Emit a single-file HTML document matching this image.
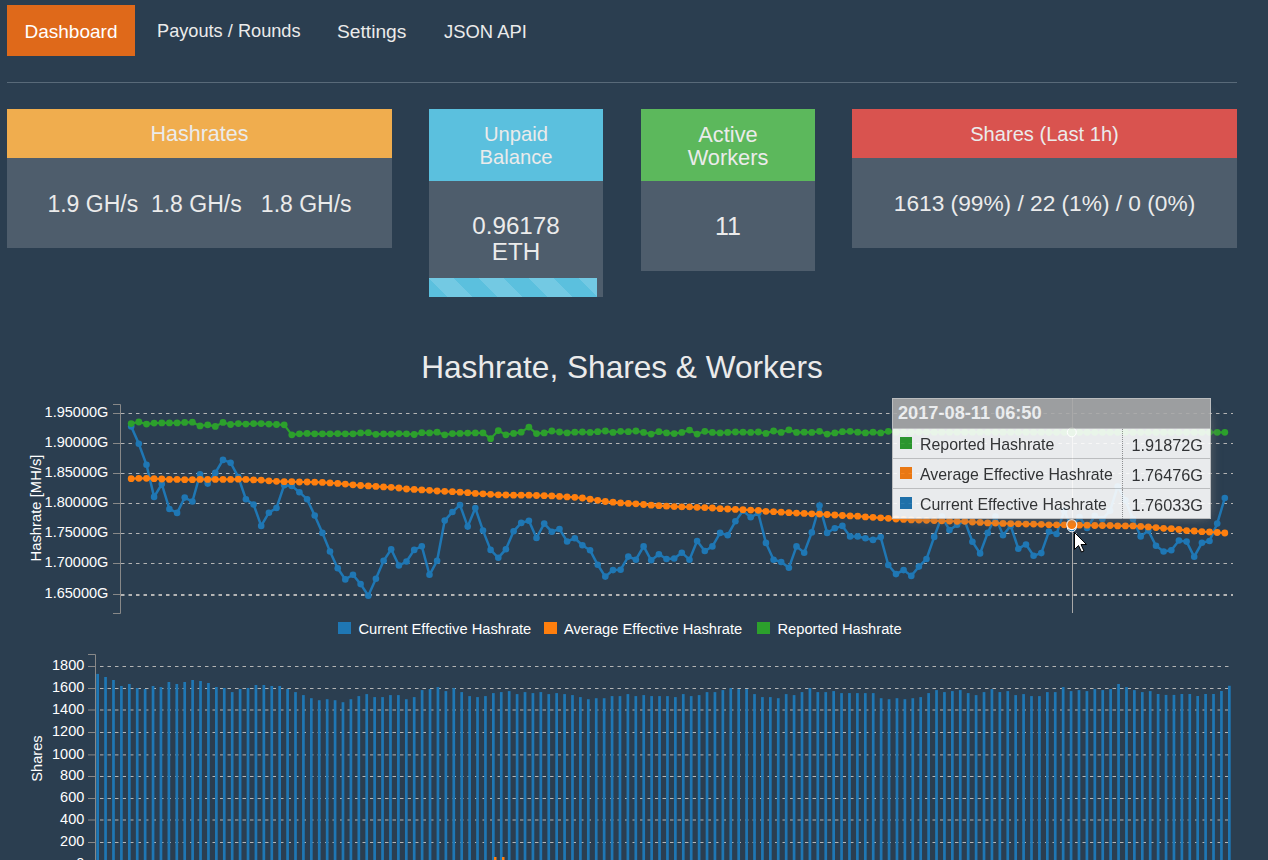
<!DOCTYPE html>
<html><head><meta charset="utf-8">
<style>
html,body{margin:0;padding:0;}
body{width:1268px;height:860px;overflow:hidden;background:#2b3e50;font-family:"Liberation Sans",sans-serif;color:#ebebeb;position:relative;}
.a{position:absolute;}
.nav{top:5px;height:51px;line-height:51px;font-size:18px;color:#ebebeb;white-space:nowrap;}
.navact{left:7px;width:128px;background:#df691a;color:#fff;text-align:center;}
hr.sep{position:absolute;left:7px;top:82px;width:1230px;height:1px;margin:0;border:0;background:#596a79;}
.card{position:absolute;top:109px;background:#4e5d6c;}
.hd{text-align:center;color:#ebebeb;font-size:19px;}
.bd{text-align:center;color:#ebebeb;font-size:23px;}
.tip{opacity:0.9;background:#fff;box-shadow:7px 7px 12px -9px #777;outline:1px solid #ccc;outline-offset:-1px;}
.tip .th{height:30px;line-height:31px;background:#aaa;color:#fff;font-weight:bold;font-size:18.2px;padding-left:6px;box-sizing:border-box;}
.tip .tr{position:relative;height:30px;border-top:1px solid #ccc;box-sizing:border-box;color:#333;font-size:15.9px;line-height:30px;}
.tip .sw{position:absolute;left:8px;top:8px;width:12px;height:12px;}
.tip .tr:last-child{height:31px;}
.tip .nm{position:absolute;left:28px;top:1px;}
.tip .vl{position:absolute;right:8px;top:1px;font-size:16.3px;}
.tip .tr:after{content:"";position:absolute;left:230px;top:0;bottom:0;border-left:1px dotted #999;}
</style></head><body>
<div class="a nav navact" style="font-size:19px;line-height:53px">Dashboard</div>
<div class="a nav" style="left:157px;font-size:18.2px;line-height:53px">Payouts / Rounds</div>
<div class="a nav" style="left:337px;font-size:19.2px;line-height:53px">Settings</div>
<div class="a nav" style="left:444px;font-size:18.4px;line-height:53px">JSON API</div>
<hr class="sep">

<div class="card" style="left:7px;width:385px;height:139px">
  <div class="hd" style="background:#f0ad4e;height:49px;line-height:50px;font-size:21.5px">Hashrates</div>
  <div class="bd" style="line-height:92px">1.9 GH/s&nbsp; 1.8 GH/s&nbsp;&nbsp; 1.8 GH/s</div>
</div>
<div class="card" style="left:429px;width:174px;height:188px">
  <div class="hd" style="background:#5bc0de;height:72px;padding-top:14px;box-sizing:border-box;line-height:23px;font-size:20.2px">Unpaid<br>Balance</div>
  <div class="bd" style="height:97px;padding-top:32px;box-sizing:border-box;line-height:26px;font-size:24.2px">0.96178<br>ETH</div>
  <div style="width:168px;height:19px;background-color:#5bc0de;background-image:linear-gradient(45deg,rgba(255,255,255,.15) 25%,transparent 25%,transparent 50%,rgba(255,255,255,.15) 50%,rgba(255,255,255,.15) 75%,transparent 75%,transparent);background-size:50px 50px"></div>
</div>
<div class="card" style="left:641px;width:174px;height:162px">
  <div class="hd" style="background:#5cb85c;height:72px;padding-top:14px;box-sizing:border-box;line-height:23px;font-size:21.8px">Active<br>Workers</div>
  <div class="bd" style="line-height:90px;font-size:25px">11</div>
</div>
<div class="card" style="left:852px;width:385px;height:139px">
  <div class="hd" style="background:#d9534f;height:49px;line-height:50px;font-size:20.1px">Shares (Last 1h)</div>
  <div class="bd" style="line-height:90px;font-size:22.7px">1613 (99%) / 22 (1%) / 0 (0%)</div>
</div>

<div class="a" style="left:0;width:1244px;top:349px;text-align:center;font-size:31.6px;color:#ebebeb">Hashrate, Shares &amp; Workers</div>

<svg class="a" style="left:0;top:0" width="1268" height="860">
<g stroke="#b4b4b4" stroke-width="1" stroke-dasharray="3.5 4"><line x1="121" y1="413.5" x2="1233" y2="413.5"/><line x1="121" y1="443.5" x2="1233" y2="443.5"/><line x1="121" y1="473.5" x2="1233" y2="473.5"/><line x1="121" y1="503.5" x2="1233" y2="503.5"/><line x1="121" y1="533.5" x2="1233" y2="533.5"/><line x1="121" y1="563.5" x2="1233" y2="563.5"/></g><line x1="121" y1="595" x2="1233" y2="595" stroke="#b4b4b4" stroke-width="2" stroke-dasharray="3.5 4"/>
<path d="M113,404.5H120.5V613.5H113" fill="none" stroke="#888" stroke-width="1"/>
<g stroke="#888" stroke-width="1"><line x1="113" y1="413.5" x2="120" y2="413.5"/><line x1="113" y1="443.5" x2="120" y2="443.5"/><line x1="113" y1="473.5" x2="120" y2="473.5"/><line x1="113" y1="503.5" x2="120" y2="503.5"/><line x1="113" y1="533.5" x2="120" y2="533.5"/><line x1="113" y1="563.5" x2="120" y2="563.5"/><line x1="113" y1="594.5" x2="120" y2="594.5"/></g>
<g fill="#fff" font-family="Liberation Sans" font-size="14.5" text-anchor="end"><text x="108.3" y="417.0">1.95000G</text><text x="108.3" y="447.0">1.90000G</text><text x="108.3" y="477.0">1.85000G</text><text x="108.3" y="507.0">1.80000G</text><text x="108.3" y="537.0">1.75000G</text><text x="108.3" y="567.0">1.70000G</text><text x="108.3" y="598.0">1.65000G</text></g>
<text transform="translate(40.5,508) rotate(-90)" fill="#fff" font-family="Liberation Sans" font-size="14.8" text-anchor="middle">Hashrate [MH/s]</text>
<polyline points="131.2,426.4 138.8,443.8 146.5,464.8 154.1,496.9 161.8,484.1 169.4,509.0 177.1,512.9 184.7,497.6 192.4,501.5 200.0,474.3 207.7,483.6 215.3,472.9 223.0,459.9 230.6,462.7 238.3,477.1 245.9,499.2 253.6,504.5 261.2,525.9 268.9,512.7 276.5,508.0 284.2,485.2 291.8,485.9 299.4,492.2 307.1,499.2 314.7,515.5 322.4,532.9 330.0,551.5 337.7,568.3 345.3,579.4 353.0,574.8 360.6,584.1 368.3,595.7 375.9,578.7 383.6,560.8 391.2,549.2 398.9,565.5 406.5,561.5 414.2,549.9 421.8,546.2 429.5,574.8 437.1,560.8 444.7,520.6 452.4,512.0 460.0,505.0 467.7,526.6 475.3,508.0 483.0,530.6 490.6,549.9 498.3,557.8 505.9,549.2 513.6,531.3 521.2,522.9 528.9,520.8 536.5,538.0 544.2,523.6 551.8,531.7 559.5,529.0 567.1,541.5 574.8,538.3 582.4,545.2 590.1,550.3 597.7,564.8 605.3,576.6 613.0,570.1 620.6,569.7 628.3,556.6 635.9,559.7 643.6,546.4 651.2,560.3 658.9,554.3 666.5,559.0 674.2,558.5 681.8,552.7 689.5,559.7 697.1,541.0 704.8,551.0 712.4,546.4 720.1,532.9 727.7,535.2 735.4,521.3 743.0,510.8 750.7,517.3 758.3,513.1 765.9,542.9 773.6,559.7 781.2,562.0 788.9,567.8 796.5,546.4 804.2,552.7 811.8,532.4 819.5,505.5 827.1,532.9 834.8,528.3 842.4,525.9 850.1,536.4 857.7,536.4 865.4,538.3 873.0,539.9 880.7,537.1 888.3,565.0 896.0,574.1 903.6,570.1 911.3,575.9 918.9,566.6 926.5,559.0 934.2,536.9 941.8,516.5 949.5,530.1 957.1,524.8 964.8,521.0 972.4,541.7 980.1,553.4 987.7,532.9 995.4,516.5 1003.0,535.2 1010.7,525.9 1018.3,548.7 1026.0,544.5 1033.6,555.7 1041.3,553.1 1048.9,531.6 1056.6,534.0 1064.2,510.7 1071.8,527.3 1079.5,517.0 1087.1,527.9 1094.8,515.8 1102.4,519.0 1110.1,510.7 1117.7,486.5 1125.4,500.3 1133.0,519.0 1140.7,536.4 1148.3,530.6 1156.0,545.7 1163.6,551.5 1171.3,550.3 1178.9,540.5 1186.6,541.6 1194.2,556.7 1201.9,542.8 1209.5,541.0 1217.2,523.6 1224.8,498.0" fill="none" stroke="#1f77b4" stroke-width="2.5"/>
<g fill="#1f77b4"><circle cx="131.2" cy="426.4" r="3.3"/><circle cx="138.8" cy="443.8" r="3.3"/><circle cx="146.5" cy="464.8" r="3.3"/><circle cx="154.1" cy="496.9" r="3.3"/><circle cx="161.8" cy="484.1" r="3.3"/><circle cx="169.4" cy="509.0" r="3.3"/><circle cx="177.1" cy="512.9" r="3.3"/><circle cx="184.7" cy="497.6" r="3.3"/><circle cx="192.4" cy="501.5" r="3.3"/><circle cx="200.0" cy="474.3" r="3.3"/><circle cx="207.7" cy="483.6" r="3.3"/><circle cx="215.3" cy="472.9" r="3.3"/><circle cx="223.0" cy="459.9" r="3.3"/><circle cx="230.6" cy="462.7" r="3.3"/><circle cx="238.3" cy="477.1" r="3.3"/><circle cx="245.9" cy="499.2" r="3.3"/><circle cx="253.6" cy="504.5" r="3.3"/><circle cx="261.2" cy="525.9" r="3.3"/><circle cx="268.9" cy="512.7" r="3.3"/><circle cx="276.5" cy="508.0" r="3.3"/><circle cx="284.2" cy="485.2" r="3.3"/><circle cx="291.8" cy="485.9" r="3.3"/><circle cx="299.4" cy="492.2" r="3.3"/><circle cx="307.1" cy="499.2" r="3.3"/><circle cx="314.7" cy="515.5" r="3.3"/><circle cx="322.4" cy="532.9" r="3.3"/><circle cx="330.0" cy="551.5" r="3.3"/><circle cx="337.7" cy="568.3" r="3.3"/><circle cx="345.3" cy="579.4" r="3.3"/><circle cx="353.0" cy="574.8" r="3.3"/><circle cx="360.6" cy="584.1" r="3.3"/><circle cx="368.3" cy="595.7" r="3.3"/><circle cx="375.9" cy="578.7" r="3.3"/><circle cx="383.6" cy="560.8" r="3.3"/><circle cx="391.2" cy="549.2" r="3.3"/><circle cx="398.9" cy="565.5" r="3.3"/><circle cx="406.5" cy="561.5" r="3.3"/><circle cx="414.2" cy="549.9" r="3.3"/><circle cx="421.8" cy="546.2" r="3.3"/><circle cx="429.5" cy="574.8" r="3.3"/><circle cx="437.1" cy="560.8" r="3.3"/><circle cx="444.7" cy="520.6" r="3.3"/><circle cx="452.4" cy="512.0" r="3.3"/><circle cx="460.0" cy="505.0" r="3.3"/><circle cx="467.7" cy="526.6" r="3.3"/><circle cx="475.3" cy="508.0" r="3.3"/><circle cx="483.0" cy="530.6" r="3.3"/><circle cx="490.6" cy="549.9" r="3.3"/><circle cx="498.3" cy="557.8" r="3.3"/><circle cx="505.9" cy="549.2" r="3.3"/><circle cx="513.6" cy="531.3" r="3.3"/><circle cx="521.2" cy="522.9" r="3.3"/><circle cx="528.9" cy="520.8" r="3.3"/><circle cx="536.5" cy="538.0" r="3.3"/><circle cx="544.2" cy="523.6" r="3.3"/><circle cx="551.8" cy="531.7" r="3.3"/><circle cx="559.5" cy="529.0" r="3.3"/><circle cx="567.1" cy="541.5" r="3.3"/><circle cx="574.8" cy="538.3" r="3.3"/><circle cx="582.4" cy="545.2" r="3.3"/><circle cx="590.1" cy="550.3" r="3.3"/><circle cx="597.7" cy="564.8" r="3.3"/><circle cx="605.3" cy="576.6" r="3.3"/><circle cx="613.0" cy="570.1" r="3.3"/><circle cx="620.6" cy="569.7" r="3.3"/><circle cx="628.3" cy="556.6" r="3.3"/><circle cx="635.9" cy="559.7" r="3.3"/><circle cx="643.6" cy="546.4" r="3.3"/><circle cx="651.2" cy="560.3" r="3.3"/><circle cx="658.9" cy="554.3" r="3.3"/><circle cx="666.5" cy="559.0" r="3.3"/><circle cx="674.2" cy="558.5" r="3.3"/><circle cx="681.8" cy="552.7" r="3.3"/><circle cx="689.5" cy="559.7" r="3.3"/><circle cx="697.1" cy="541.0" r="3.3"/><circle cx="704.8" cy="551.0" r="3.3"/><circle cx="712.4" cy="546.4" r="3.3"/><circle cx="720.1" cy="532.9" r="3.3"/><circle cx="727.7" cy="535.2" r="3.3"/><circle cx="735.4" cy="521.3" r="3.3"/><circle cx="743.0" cy="510.8" r="3.3"/><circle cx="750.7" cy="517.3" r="3.3"/><circle cx="758.3" cy="513.1" r="3.3"/><circle cx="765.9" cy="542.9" r="3.3"/><circle cx="773.6" cy="559.7" r="3.3"/><circle cx="781.2" cy="562.0" r="3.3"/><circle cx="788.9" cy="567.8" r="3.3"/><circle cx="796.5" cy="546.4" r="3.3"/><circle cx="804.2" cy="552.7" r="3.3"/><circle cx="811.8" cy="532.4" r="3.3"/><circle cx="819.5" cy="505.5" r="3.3"/><circle cx="827.1" cy="532.9" r="3.3"/><circle cx="834.8" cy="528.3" r="3.3"/><circle cx="842.4" cy="525.9" r="3.3"/><circle cx="850.1" cy="536.4" r="3.3"/><circle cx="857.7" cy="536.4" r="3.3"/><circle cx="865.4" cy="538.3" r="3.3"/><circle cx="873.0" cy="539.9" r="3.3"/><circle cx="880.7" cy="537.1" r="3.3"/><circle cx="888.3" cy="565.0" r="3.3"/><circle cx="896.0" cy="574.1" r="3.3"/><circle cx="903.6" cy="570.1" r="3.3"/><circle cx="911.3" cy="575.9" r="3.3"/><circle cx="918.9" cy="566.6" r="3.3"/><circle cx="926.5" cy="559.0" r="3.3"/><circle cx="934.2" cy="536.9" r="3.3"/><circle cx="941.8" cy="516.5" r="3.3"/><circle cx="949.5" cy="530.1" r="3.3"/><circle cx="957.1" cy="524.8" r="3.3"/><circle cx="964.8" cy="521.0" r="3.3"/><circle cx="972.4" cy="541.7" r="3.3"/><circle cx="980.1" cy="553.4" r="3.3"/><circle cx="987.7" cy="532.9" r="3.3"/><circle cx="995.4" cy="516.5" r="3.3"/><circle cx="1003.0" cy="535.2" r="3.3"/><circle cx="1010.7" cy="525.9" r="3.3"/><circle cx="1018.3" cy="548.7" r="3.3"/><circle cx="1026.0" cy="544.5" r="3.3"/><circle cx="1033.6" cy="555.7" r="3.3"/><circle cx="1041.3" cy="553.1" r="3.3"/><circle cx="1048.9" cy="531.6" r="3.3"/><circle cx="1056.6" cy="534.0" r="3.3"/><circle cx="1064.2" cy="510.7" r="3.3"/><circle cx="1071.8" cy="527.3" r="3.3"/><circle cx="1079.5" cy="517.0" r="3.3"/><circle cx="1087.1" cy="527.9" r="3.3"/><circle cx="1094.8" cy="515.8" r="3.3"/><circle cx="1102.4" cy="519.0" r="3.3"/><circle cx="1110.1" cy="510.7" r="3.3"/><circle cx="1117.7" cy="486.5" r="3.3"/><circle cx="1125.4" cy="500.3" r="3.3"/><circle cx="1133.0" cy="519.0" r="3.3"/><circle cx="1140.7" cy="536.4" r="3.3"/><circle cx="1148.3" cy="530.6" r="3.3"/><circle cx="1156.0" cy="545.7" r="3.3"/><circle cx="1163.6" cy="551.5" r="3.3"/><circle cx="1171.3" cy="550.3" r="3.3"/><circle cx="1178.9" cy="540.5" r="3.3"/><circle cx="1186.6" cy="541.6" r="3.3"/><circle cx="1194.2" cy="556.7" r="3.3"/><circle cx="1201.9" cy="542.8" r="3.3"/><circle cx="1209.5" cy="541.0" r="3.3"/><circle cx="1217.2" cy="523.6" r="3.3"/><circle cx="1224.8" cy="498.0" r="3.3"/></g>
<polyline points="131.2,478.7 138.8,478.3 146.5,478.3 154.1,478.7 161.8,479.0 169.4,479.4 177.1,479.4 184.7,479.7 192.4,479.7 200.0,479.4 207.7,479.4 215.3,479.4 223.0,479.4 230.6,479.4 238.3,479.2 245.9,479.4 253.6,479.9 261.2,480.1 268.9,480.8 276.5,481.3 284.2,481.7 291.8,481.7 299.4,482.0 307.1,482.0 314.7,482.2 322.4,482.4 330.0,482.9 337.7,483.4 345.3,484.1 353.0,484.8 360.6,485.5 368.3,485.9 375.9,486.4 383.6,486.9 391.2,487.3 398.9,488.0 406.5,489.0 414.2,489.4 421.8,489.9 429.5,490.3 437.1,491.0 444.7,491.3 452.4,491.7 460.0,492.2 467.7,492.7 475.3,493.4 483.0,493.8 490.6,494.3 498.3,494.8 505.9,495.0 513.6,495.2 521.2,495.2 528.9,495.2 536.5,495.5 544.2,495.7 551.8,495.9 559.5,496.4 567.1,496.9 574.8,497.3 582.4,498.0 590.1,499.2 597.7,500.3 605.3,501.5 613.0,502.2 620.6,502.9 628.3,503.4 635.9,503.8 643.6,504.5 651.2,505.2 658.9,505.7 666.5,506.2 674.2,506.6 681.8,506.9 689.5,506.9 697.1,507.3 704.8,507.6 712.4,508.0 720.1,508.7 727.7,509.0 735.4,509.4 743.0,509.7 750.7,510.1 758.3,510.3 765.9,511.3 773.6,511.7 781.2,512.2 788.9,512.7 796.5,513.1 804.2,513.4 811.8,513.8 819.5,514.1 827.1,514.5 834.8,515.0 842.4,515.5 850.1,515.9 857.7,516.2 865.4,516.9 873.0,517.3 880.7,517.8 888.3,518.3 896.0,519.0 903.6,519.4 911.3,519.9 918.9,520.1 926.5,520.3 934.2,520.6 941.8,520.8 949.5,521.0 957.1,521.3 964.8,521.3 972.4,522.0 980.1,522.4 987.7,522.9 995.4,523.1 1003.0,523.4 1010.7,523.6 1018.3,523.8 1026.0,524.1 1033.6,524.1 1041.3,524.3 1048.9,524.8 1056.6,524.8 1064.2,524.8 1071.8,524.6 1079.5,525.2 1087.1,525.2 1094.8,525.5 1102.4,525.5 1110.1,525.5 1117.7,525.9 1125.4,525.9 1133.0,525.9 1140.7,526.4 1148.3,526.9 1156.0,527.6 1163.6,528.3 1171.3,528.7 1178.9,529.4 1186.6,530.6 1194.2,531.0 1201.9,531.7 1209.5,532.0 1217.2,532.5 1224.8,533.0" fill="none" stroke="#ff7f0e" stroke-width="2.2"/>
<g fill="#ff7f0e"><circle cx="131.2" cy="478.7" r="3.4"/><circle cx="138.8" cy="478.3" r="3.4"/><circle cx="146.5" cy="478.3" r="3.4"/><circle cx="154.1" cy="478.7" r="3.4"/><circle cx="161.8" cy="479.0" r="3.4"/><circle cx="169.4" cy="479.4" r="3.4"/><circle cx="177.1" cy="479.4" r="3.4"/><circle cx="184.7" cy="479.7" r="3.4"/><circle cx="192.4" cy="479.7" r="3.4"/><circle cx="200.0" cy="479.4" r="3.4"/><circle cx="207.7" cy="479.4" r="3.4"/><circle cx="215.3" cy="479.4" r="3.4"/><circle cx="223.0" cy="479.4" r="3.4"/><circle cx="230.6" cy="479.4" r="3.4"/><circle cx="238.3" cy="479.2" r="3.4"/><circle cx="245.9" cy="479.4" r="3.4"/><circle cx="253.6" cy="479.9" r="3.4"/><circle cx="261.2" cy="480.1" r="3.4"/><circle cx="268.9" cy="480.8" r="3.4"/><circle cx="276.5" cy="481.3" r="3.4"/><circle cx="284.2" cy="481.7" r="3.4"/><circle cx="291.8" cy="481.7" r="3.4"/><circle cx="299.4" cy="482.0" r="3.4"/><circle cx="307.1" cy="482.0" r="3.4"/><circle cx="314.7" cy="482.2" r="3.4"/><circle cx="322.4" cy="482.4" r="3.4"/><circle cx="330.0" cy="482.9" r="3.4"/><circle cx="337.7" cy="483.4" r="3.4"/><circle cx="345.3" cy="484.1" r="3.4"/><circle cx="353.0" cy="484.8" r="3.4"/><circle cx="360.6" cy="485.5" r="3.4"/><circle cx="368.3" cy="485.9" r="3.4"/><circle cx="375.9" cy="486.4" r="3.4"/><circle cx="383.6" cy="486.9" r="3.4"/><circle cx="391.2" cy="487.3" r="3.4"/><circle cx="398.9" cy="488.0" r="3.4"/><circle cx="406.5" cy="489.0" r="3.4"/><circle cx="414.2" cy="489.4" r="3.4"/><circle cx="421.8" cy="489.9" r="3.4"/><circle cx="429.5" cy="490.3" r="3.4"/><circle cx="437.1" cy="491.0" r="3.4"/><circle cx="444.7" cy="491.3" r="3.4"/><circle cx="452.4" cy="491.7" r="3.4"/><circle cx="460.0" cy="492.2" r="3.4"/><circle cx="467.7" cy="492.7" r="3.4"/><circle cx="475.3" cy="493.4" r="3.4"/><circle cx="483.0" cy="493.8" r="3.4"/><circle cx="490.6" cy="494.3" r="3.4"/><circle cx="498.3" cy="494.8" r="3.4"/><circle cx="505.9" cy="495.0" r="3.4"/><circle cx="513.6" cy="495.2" r="3.4"/><circle cx="521.2" cy="495.2" r="3.4"/><circle cx="528.9" cy="495.2" r="3.4"/><circle cx="536.5" cy="495.5" r="3.4"/><circle cx="544.2" cy="495.7" r="3.4"/><circle cx="551.8" cy="495.9" r="3.4"/><circle cx="559.5" cy="496.4" r="3.4"/><circle cx="567.1" cy="496.9" r="3.4"/><circle cx="574.8" cy="497.3" r="3.4"/><circle cx="582.4" cy="498.0" r="3.4"/><circle cx="590.1" cy="499.2" r="3.4"/><circle cx="597.7" cy="500.3" r="3.4"/><circle cx="605.3" cy="501.5" r="3.4"/><circle cx="613.0" cy="502.2" r="3.4"/><circle cx="620.6" cy="502.9" r="3.4"/><circle cx="628.3" cy="503.4" r="3.4"/><circle cx="635.9" cy="503.8" r="3.4"/><circle cx="643.6" cy="504.5" r="3.4"/><circle cx="651.2" cy="505.2" r="3.4"/><circle cx="658.9" cy="505.7" r="3.4"/><circle cx="666.5" cy="506.2" r="3.4"/><circle cx="674.2" cy="506.6" r="3.4"/><circle cx="681.8" cy="506.9" r="3.4"/><circle cx="689.5" cy="506.9" r="3.4"/><circle cx="697.1" cy="507.3" r="3.4"/><circle cx="704.8" cy="507.6" r="3.4"/><circle cx="712.4" cy="508.0" r="3.4"/><circle cx="720.1" cy="508.7" r="3.4"/><circle cx="727.7" cy="509.0" r="3.4"/><circle cx="735.4" cy="509.4" r="3.4"/><circle cx="743.0" cy="509.7" r="3.4"/><circle cx="750.7" cy="510.1" r="3.4"/><circle cx="758.3" cy="510.3" r="3.4"/><circle cx="765.9" cy="511.3" r="3.4"/><circle cx="773.6" cy="511.7" r="3.4"/><circle cx="781.2" cy="512.2" r="3.4"/><circle cx="788.9" cy="512.7" r="3.4"/><circle cx="796.5" cy="513.1" r="3.4"/><circle cx="804.2" cy="513.4" r="3.4"/><circle cx="811.8" cy="513.8" r="3.4"/><circle cx="819.5" cy="514.1" r="3.4"/><circle cx="827.1" cy="514.5" r="3.4"/><circle cx="834.8" cy="515.0" r="3.4"/><circle cx="842.4" cy="515.5" r="3.4"/><circle cx="850.1" cy="515.9" r="3.4"/><circle cx="857.7" cy="516.2" r="3.4"/><circle cx="865.4" cy="516.9" r="3.4"/><circle cx="873.0" cy="517.3" r="3.4"/><circle cx="880.7" cy="517.8" r="3.4"/><circle cx="888.3" cy="518.3" r="3.4"/><circle cx="896.0" cy="519.0" r="3.4"/><circle cx="903.6" cy="519.4" r="3.4"/><circle cx="911.3" cy="519.9" r="3.4"/><circle cx="918.9" cy="520.1" r="3.4"/><circle cx="926.5" cy="520.3" r="3.4"/><circle cx="934.2" cy="520.6" r="3.4"/><circle cx="941.8" cy="520.8" r="3.4"/><circle cx="949.5" cy="521.0" r="3.4"/><circle cx="957.1" cy="521.3" r="3.4"/><circle cx="964.8" cy="521.3" r="3.4"/><circle cx="972.4" cy="522.0" r="3.4"/><circle cx="980.1" cy="522.4" r="3.4"/><circle cx="987.7" cy="522.9" r="3.4"/><circle cx="995.4" cy="523.1" r="3.4"/><circle cx="1003.0" cy="523.4" r="3.4"/><circle cx="1010.7" cy="523.6" r="3.4"/><circle cx="1018.3" cy="523.8" r="3.4"/><circle cx="1026.0" cy="524.1" r="3.4"/><circle cx="1033.6" cy="524.1" r="3.4"/><circle cx="1041.3" cy="524.3" r="3.4"/><circle cx="1048.9" cy="524.8" r="3.4"/><circle cx="1056.6" cy="524.8" r="3.4"/><circle cx="1064.2" cy="524.8" r="3.4"/><circle cx="1071.8" cy="524.6" r="3.4"/><circle cx="1079.5" cy="525.2" r="3.4"/><circle cx="1087.1" cy="525.2" r="3.4"/><circle cx="1094.8" cy="525.5" r="3.4"/><circle cx="1102.4" cy="525.5" r="3.4"/><circle cx="1110.1" cy="525.5" r="3.4"/><circle cx="1117.7" cy="525.9" r="3.4"/><circle cx="1125.4" cy="525.9" r="3.4"/><circle cx="1133.0" cy="525.9" r="3.4"/><circle cx="1140.7" cy="526.4" r="3.4"/><circle cx="1148.3" cy="526.9" r="3.4"/><circle cx="1156.0" cy="527.6" r="3.4"/><circle cx="1163.6" cy="528.3" r="3.4"/><circle cx="1171.3" cy="528.7" r="3.4"/><circle cx="1178.9" cy="529.4" r="3.4"/><circle cx="1186.6" cy="530.6" r="3.4"/><circle cx="1194.2" cy="531.0" r="3.4"/><circle cx="1201.9" cy="531.7" r="3.4"/><circle cx="1209.5" cy="532.0" r="3.4"/><circle cx="1217.2" cy="532.5" r="3.4"/><circle cx="1224.8" cy="533.0" r="3.4"/></g>
<polyline points="131.2,423.6 138.8,422.0 146.5,424.1 154.1,423.1 161.8,422.9 169.4,422.9 177.1,422.9 184.7,422.4 192.4,422.2 200.0,425.9 207.7,424.8 215.3,426.4 223.0,422.4 230.6,424.5 238.3,423.6 245.9,424.1 253.6,423.6 261.2,423.6 268.9,424.1 276.5,424.5 284.2,424.8 291.8,434.8 299.4,433.8 307.1,433.4 314.7,433.8 322.4,433.8 330.0,433.8 337.7,433.6 345.3,433.8 353.0,433.8 360.6,432.9 368.3,432.7 375.9,434.3 383.6,433.8 391.2,434.1 398.9,433.6 406.5,433.8 414.2,434.5 421.8,432.7 429.5,432.9 437.1,432.2 444.7,434.8 452.4,433.6 460.0,433.4 467.7,433.1 475.3,432.9 483.0,432.9 490.6,438.7 498.3,430.6 505.9,434.8 513.6,433.4 521.2,432.2 528.9,427.1 536.5,433.6 544.2,432.9 551.8,431.0 559.5,432.0 567.1,432.9 574.8,432.2 582.4,432.0 590.1,432.4 597.7,431.7 605.3,431.0 613.0,432.4 620.6,431.3 628.3,431.7 635.9,431.0 643.6,432.4 651.2,434.1 658.9,431.7 666.5,432.9 674.2,433.6 681.8,432.4 689.5,430.1 697.1,434.1 704.8,431.3 712.4,432.4 720.1,432.9 727.7,432.4 735.4,432.0 743.0,432.2 750.7,432.4 758.3,432.0 765.9,433.4 773.6,431.0 781.2,432.4 788.9,429.9 796.5,432.4 804.2,432.2 811.8,432.4 819.5,431.3 827.1,434.1 834.8,432.9 842.4,431.7 850.1,431.3 857.7,432.2 865.4,432.9 873.0,432.2 880.7,432.9 888.3,431.3 896.0,432.2 903.6,432.2 911.3,432.2 918.9,432.2 926.5,432.2 934.2,432.2 941.8,432.2 949.5,432.2 957.1,432.2 964.8,432.2 972.4,432.2 980.1,432.2 987.7,432.2 995.4,432.2 1003.0,432.2 1010.7,432.2 1018.3,432.2 1026.0,432.2 1033.6,432.2 1041.3,432.2 1048.9,432.3 1056.6,432.3 1064.2,432.3 1071.8,432.3 1079.5,432.3 1087.1,432.3 1094.8,432.3 1102.4,432.3 1110.1,432.3 1117.7,432.3 1125.4,432.3 1133.0,432.3 1140.7,432.3 1148.3,432.3 1156.0,432.3 1163.6,432.3 1171.3,432.3 1178.9,432.3 1186.6,432.3 1194.2,432.3 1201.9,432.3 1209.5,432.3 1217.2,432.3 1224.8,432.3" fill="none" stroke="#2ca02c" stroke-width="2.2"/>
<g fill="#2ca02c"><circle cx="131.2" cy="423.6" r="3.4"/><circle cx="138.8" cy="422.0" r="3.4"/><circle cx="146.5" cy="424.1" r="3.4"/><circle cx="154.1" cy="423.1" r="3.4"/><circle cx="161.8" cy="422.9" r="3.4"/><circle cx="169.4" cy="422.9" r="3.4"/><circle cx="177.1" cy="422.9" r="3.4"/><circle cx="184.7" cy="422.4" r="3.4"/><circle cx="192.4" cy="422.2" r="3.4"/><circle cx="200.0" cy="425.9" r="3.4"/><circle cx="207.7" cy="424.8" r="3.4"/><circle cx="215.3" cy="426.4" r="3.4"/><circle cx="223.0" cy="422.4" r="3.4"/><circle cx="230.6" cy="424.5" r="3.4"/><circle cx="238.3" cy="423.6" r="3.4"/><circle cx="245.9" cy="424.1" r="3.4"/><circle cx="253.6" cy="423.6" r="3.4"/><circle cx="261.2" cy="423.6" r="3.4"/><circle cx="268.9" cy="424.1" r="3.4"/><circle cx="276.5" cy="424.5" r="3.4"/><circle cx="284.2" cy="424.8" r="3.4"/><circle cx="291.8" cy="434.8" r="3.4"/><circle cx="299.4" cy="433.8" r="3.4"/><circle cx="307.1" cy="433.4" r="3.4"/><circle cx="314.7" cy="433.8" r="3.4"/><circle cx="322.4" cy="433.8" r="3.4"/><circle cx="330.0" cy="433.8" r="3.4"/><circle cx="337.7" cy="433.6" r="3.4"/><circle cx="345.3" cy="433.8" r="3.4"/><circle cx="353.0" cy="433.8" r="3.4"/><circle cx="360.6" cy="432.9" r="3.4"/><circle cx="368.3" cy="432.7" r="3.4"/><circle cx="375.9" cy="434.3" r="3.4"/><circle cx="383.6" cy="433.8" r="3.4"/><circle cx="391.2" cy="434.1" r="3.4"/><circle cx="398.9" cy="433.6" r="3.4"/><circle cx="406.5" cy="433.8" r="3.4"/><circle cx="414.2" cy="434.5" r="3.4"/><circle cx="421.8" cy="432.7" r="3.4"/><circle cx="429.5" cy="432.9" r="3.4"/><circle cx="437.1" cy="432.2" r="3.4"/><circle cx="444.7" cy="434.8" r="3.4"/><circle cx="452.4" cy="433.6" r="3.4"/><circle cx="460.0" cy="433.4" r="3.4"/><circle cx="467.7" cy="433.1" r="3.4"/><circle cx="475.3" cy="432.9" r="3.4"/><circle cx="483.0" cy="432.9" r="3.4"/><circle cx="490.6" cy="438.7" r="3.4"/><circle cx="498.3" cy="430.6" r="3.4"/><circle cx="505.9" cy="434.8" r="3.4"/><circle cx="513.6" cy="433.4" r="3.4"/><circle cx="521.2" cy="432.2" r="3.4"/><circle cx="528.9" cy="427.1" r="3.4"/><circle cx="536.5" cy="433.6" r="3.4"/><circle cx="544.2" cy="432.9" r="3.4"/><circle cx="551.8" cy="431.0" r="3.4"/><circle cx="559.5" cy="432.0" r="3.4"/><circle cx="567.1" cy="432.9" r="3.4"/><circle cx="574.8" cy="432.2" r="3.4"/><circle cx="582.4" cy="432.0" r="3.4"/><circle cx="590.1" cy="432.4" r="3.4"/><circle cx="597.7" cy="431.7" r="3.4"/><circle cx="605.3" cy="431.0" r="3.4"/><circle cx="613.0" cy="432.4" r="3.4"/><circle cx="620.6" cy="431.3" r="3.4"/><circle cx="628.3" cy="431.7" r="3.4"/><circle cx="635.9" cy="431.0" r="3.4"/><circle cx="643.6" cy="432.4" r="3.4"/><circle cx="651.2" cy="434.1" r="3.4"/><circle cx="658.9" cy="431.7" r="3.4"/><circle cx="666.5" cy="432.9" r="3.4"/><circle cx="674.2" cy="433.6" r="3.4"/><circle cx="681.8" cy="432.4" r="3.4"/><circle cx="689.5" cy="430.1" r="3.4"/><circle cx="697.1" cy="434.1" r="3.4"/><circle cx="704.8" cy="431.3" r="3.4"/><circle cx="712.4" cy="432.4" r="3.4"/><circle cx="720.1" cy="432.9" r="3.4"/><circle cx="727.7" cy="432.4" r="3.4"/><circle cx="735.4" cy="432.0" r="3.4"/><circle cx="743.0" cy="432.2" r="3.4"/><circle cx="750.7" cy="432.4" r="3.4"/><circle cx="758.3" cy="432.0" r="3.4"/><circle cx="765.9" cy="433.4" r="3.4"/><circle cx="773.6" cy="431.0" r="3.4"/><circle cx="781.2" cy="432.4" r="3.4"/><circle cx="788.9" cy="429.9" r="3.4"/><circle cx="796.5" cy="432.4" r="3.4"/><circle cx="804.2" cy="432.2" r="3.4"/><circle cx="811.8" cy="432.4" r="3.4"/><circle cx="819.5" cy="431.3" r="3.4"/><circle cx="827.1" cy="434.1" r="3.4"/><circle cx="834.8" cy="432.9" r="3.4"/><circle cx="842.4" cy="431.7" r="3.4"/><circle cx="850.1" cy="431.3" r="3.4"/><circle cx="857.7" cy="432.2" r="3.4"/><circle cx="865.4" cy="432.9" r="3.4"/><circle cx="873.0" cy="432.2" r="3.4"/><circle cx="880.7" cy="432.9" r="3.4"/><circle cx="888.3" cy="431.3" r="3.4"/><circle cx="896.0" cy="432.2" r="3.4"/><circle cx="903.6" cy="432.2" r="3.4"/><circle cx="911.3" cy="432.2" r="3.4"/><circle cx="918.9" cy="432.2" r="3.4"/><circle cx="926.5" cy="432.2" r="3.4"/><circle cx="934.2" cy="432.2" r="3.4"/><circle cx="941.8" cy="432.2" r="3.4"/><circle cx="949.5" cy="432.2" r="3.4"/><circle cx="957.1" cy="432.2" r="3.4"/><circle cx="964.8" cy="432.2" r="3.4"/><circle cx="972.4" cy="432.2" r="3.4"/><circle cx="980.1" cy="432.2" r="3.4"/><circle cx="987.7" cy="432.2" r="3.4"/><circle cx="995.4" cy="432.2" r="3.4"/><circle cx="1003.0" cy="432.2" r="3.4"/><circle cx="1010.7" cy="432.2" r="3.4"/><circle cx="1018.3" cy="432.2" r="3.4"/><circle cx="1026.0" cy="432.2" r="3.4"/><circle cx="1033.6" cy="432.2" r="3.4"/><circle cx="1041.3" cy="432.2" r="3.4"/><circle cx="1048.9" cy="432.3" r="3.4"/><circle cx="1056.6" cy="432.3" r="3.4"/><circle cx="1064.2" cy="432.3" r="3.4"/><circle cx="1071.8" cy="432.3" r="3.4"/><circle cx="1079.5" cy="432.3" r="3.4"/><circle cx="1087.1" cy="432.3" r="3.4"/><circle cx="1094.8" cy="432.3" r="3.4"/><circle cx="1102.4" cy="432.3" r="3.4"/><circle cx="1110.1" cy="432.3" r="3.4"/><circle cx="1117.7" cy="432.3" r="3.4"/><circle cx="1125.4" cy="432.3" r="3.4"/><circle cx="1133.0" cy="432.3" r="3.4"/><circle cx="1140.7" cy="432.3" r="3.4"/><circle cx="1148.3" cy="432.3" r="3.4"/><circle cx="1156.0" cy="432.3" r="3.4"/><circle cx="1163.6" cy="432.3" r="3.4"/><circle cx="1171.3" cy="432.3" r="3.4"/><circle cx="1178.9" cy="432.3" r="3.4"/><circle cx="1186.6" cy="432.3" r="3.4"/><circle cx="1194.2" cy="432.3" r="3.4"/><circle cx="1201.9" cy="432.3" r="3.4"/><circle cx="1209.5" cy="432.3" r="3.4"/><circle cx="1217.2" cy="432.3" r="3.4"/><circle cx="1224.8" cy="432.3" r="3.4"/></g>
<line x1="1072.5" y1="398" x2="1072.5" y2="613" stroke="#a8a8a8" stroke-width="1"/>
<circle cx="1071.8" cy="527.3" r="4.5" fill="#1f77b4" stroke="#fff" stroke-width="1"/>
<circle cx="1071.8" cy="524.6" r="5" fill="#ff7f0e" stroke="#fff" stroke-width="1.2"/>
<circle cx="1071.8" cy="432.3" r="4.5" fill="#2ca02c" stroke="#fff" stroke-width="1"/>
<g font-family="Liberation Sans" font-size="14.7" fill="#fff"><rect x="338" y="622" width="13" height="12" fill="#1f77b4"/><text x="358.5" y="634">Current Effective Hashrate</text><rect x="544" y="622" width="13" height="12" fill="#ff7f0e"/><text x="564" y="634">Average Effective Hashrate</text><rect x="757" y="622" width="13" height="12" fill="#2ca02c"/><text x="777.5" y="634">Reported Hashrate</text></g>
<g stroke="#b4b4b4" stroke-width="1" stroke-dasharray="3.5 4"><line x1="100" y1="666.5" x2="1231" y2="666.5"/><line x1="100" y1="688.5" x2="1231" y2="688.5"/><line x1="100" y1="710" x2="1231" y2="710"/><line x1="100" y1="732.5" x2="1231" y2="732.5"/><line x1="100" y1="754.9" x2="1231" y2="754.9"/><line x1="100" y1="776.5" x2="1231" y2="776.5"/><line x1="100" y1="798.5" x2="1231" y2="798.5"/><line x1="100" y1="820" x2="1231" y2="820"/><line x1="100" y1="842.5" x2="1231" y2="842.5"/></g>
<path d="M88,654.5H95.5V860" fill="none" stroke="#888" stroke-width="1"/>
<g stroke="#888" stroke-width="1"><line x1="88" y1="666.5" x2="95" y2="666.5"/><line x1="88" y1="688.5" x2="95" y2="688.5"/><line x1="88" y1="710" x2="95" y2="710"/><line x1="88" y1="732.5" x2="95" y2="732.5"/><line x1="88" y1="754.9" x2="95" y2="754.9"/><line x1="88" y1="776.5" x2="95" y2="776.5"/><line x1="88" y1="798.5" x2="95" y2="798.5"/><line x1="88" y1="820" x2="95" y2="820"/><line x1="88" y1="842.5" x2="95" y2="842.5"/></g>
<g fill="#fff" font-family="Liberation Sans" font-size="14.5" text-anchor="end"><text x="84.3" y="670.2">1800</text><text x="84.3" y="692.2">1600</text><text x="84.3" y="713.7">1400</text><text x="84.3" y="736.2">1200</text><text x="84.3" y="758.6">1000</text><text x="84.3" y="780.2">800</text><text x="84.3" y="802.2">600</text><text x="84.3" y="823.7">400</text><text x="84.3" y="846.2">200</text><text x="84.3" y="868">0</text></g>
<text transform="translate(42,758.5) rotate(-90)" fill="#fff" font-family="Liberation Sans" font-size="14.6" text-anchor="middle">Shares</text>
<g fill="#1f77b4"><rect x="96.30" y="673.9" width="2.7" height="196.1"/><rect x="104.21" y="677.0" width="2.7" height="193.0"/><rect x="112.13" y="680.0" width="2.7" height="190.0"/><rect x="120.04" y="686.0" width="2.7" height="184.0"/><rect x="127.96" y="684.0" width="2.7" height="186.0"/><rect x="135.87" y="688.0" width="2.7" height="182.0"/><rect x="143.78" y="689.0" width="2.7" height="181.0"/><rect x="151.70" y="686.0" width="2.7" height="184.0"/><rect x="159.61" y="687.0" width="2.7" height="183.0"/><rect x="167.53" y="682.0" width="2.7" height="188.0"/><rect x="175.44" y="684.0" width="2.7" height="186.0"/><rect x="183.35" y="682.0" width="2.7" height="188.0"/><rect x="191.27" y="680.0" width="2.7" height="190.0"/><rect x="199.18" y="681.0" width="2.7" height="189.0"/><rect x="207.10" y="683.0" width="2.7" height="187.0"/><rect x="215.01" y="687.0" width="2.7" height="183.0"/><rect x="222.92" y="688.0" width="2.7" height="182.0"/><rect x="230.84" y="692.1" width="2.7" height="177.9"/><rect x="238.75" y="689.0" width="2.7" height="181.0"/><rect x="246.67" y="688.0" width="2.7" height="182.0"/><rect x="254.58" y="685.0" width="2.7" height="185.0"/><rect x="262.49" y="685.0" width="2.7" height="185.0"/><rect x="270.41" y="686.0" width="2.7" height="184.0"/><rect x="278.32" y="686.0" width="2.7" height="184.0"/><rect x="286.24" y="689.0" width="2.7" height="181.0"/><rect x="294.15" y="692.1" width="2.7" height="177.9"/><rect x="302.06" y="695.1" width="2.7" height="174.9"/><rect x="309.98" y="698.2" width="2.7" height="171.8"/><rect x="317.89" y="700.2" width="2.7" height="169.8"/><rect x="325.81" y="699.2" width="2.7" height="170.8"/><rect x="333.72" y="700.2" width="2.7" height="169.8"/><rect x="341.63" y="702.2" width="2.7" height="167.8"/><rect x="349.55" y="699.2" width="2.7" height="170.8"/><rect x="357.46" y="696.1" width="2.7" height="173.9"/><rect x="365.38" y="694.1" width="2.7" height="175.9"/><rect x="373.29" y="697.1" width="2.7" height="172.9"/><rect x="381.20" y="697.1" width="2.7" height="172.9"/><rect x="389.12" y="695.1" width="2.7" height="174.9"/><rect x="397.03" y="695.1" width="2.7" height="174.9"/><rect x="404.95" y="699.2" width="2.7" height="170.8"/><rect x="412.86" y="697.1" width="2.7" height="172.9"/><rect x="420.77" y="690.1" width="2.7" height="179.9"/><rect x="428.69" y="689.1" width="2.7" height="180.9"/><rect x="436.60" y="687.1" width="2.7" height="182.9"/><rect x="444.52" y="691.1" width="2.7" height="178.9"/><rect x="452.43" y="688.1" width="2.7" height="181.9"/><rect x="460.34" y="692.1" width="2.7" height="177.9"/><rect x="468.26" y="696.1" width="2.7" height="173.9"/><rect x="476.17" y="697.1" width="2.7" height="172.9"/><rect x="484.09" y="696.1" width="2.7" height="173.9"/><rect x="492.00" y="693.1" width="2.7" height="176.9"/><rect x="499.91" y="692.1" width="2.7" height="177.9"/><rect x="507.83" y="691.1" width="2.7" height="178.9"/><rect x="515.74" y="694.1" width="2.7" height="175.9"/><rect x="523.66" y="692.1" width="2.7" height="177.9"/><rect x="531.57" y="693.1" width="2.7" height="176.9"/><rect x="539.48" y="692.1" width="2.7" height="177.9"/><rect x="547.40" y="694.1" width="2.7" height="175.9"/><rect x="555.31" y="693.1" width="2.7" height="176.9"/><rect x="563.23" y="694.1" width="2.7" height="175.9"/><rect x="571.14" y="695.1" width="2.7" height="174.9"/><rect x="579.05" y="697.1" width="2.7" height="172.9"/><rect x="586.97" y="699.2" width="2.7" height="170.8"/><rect x="594.88" y="698.2" width="2.7" height="171.8"/><rect x="602.80" y="698.2" width="2.7" height="171.8"/><rect x="610.71" y="696.1" width="2.7" height="173.9"/><rect x="618.62" y="696.1" width="2.7" height="173.9"/><rect x="626.54" y="694.1" width="2.7" height="175.9"/><rect x="634.45" y="696.1" width="2.7" height="173.9"/><rect x="642.37" y="695.1" width="2.7" height="174.9"/><rect x="650.28" y="696.1" width="2.7" height="173.9"/><rect x="658.19" y="696.1" width="2.7" height="173.9"/><rect x="666.11" y="696.1" width="2.7" height="173.9"/><rect x="674.02" y="697.1" width="2.7" height="172.9"/><rect x="681.93" y="694.1" width="2.7" height="175.9"/><rect x="689.85" y="696.1" width="2.7" height="173.9"/><rect x="697.76" y="695.1" width="2.7" height="174.9"/><rect x="705.68" y="692.1" width="2.7" height="177.9"/><rect x="713.59" y="692.1" width="2.7" height="177.9"/><rect x="721.50" y="690.1" width="2.7" height="179.9"/><rect x="729.42" y="688.1" width="2.7" height="181.9"/><rect x="737.33" y="689.1" width="2.7" height="180.9"/><rect x="745.25" y="689.1" width="2.7" height="180.9"/><rect x="753.16" y="694.1" width="2.7" height="175.9"/><rect x="761.07" y="697.1" width="2.7" height="172.9"/><rect x="768.99" y="697.1" width="2.7" height="172.9"/><rect x="776.90" y="698.2" width="2.7" height="171.8"/><rect x="784.82" y="694.1" width="2.7" height="175.9"/><rect x="792.73" y="695.1" width="2.7" height="174.9"/><rect x="800.64" y="692.1" width="2.7" height="177.9"/><rect x="808.56" y="688.1" width="2.7" height="181.9"/><rect x="816.47" y="692.1" width="2.7" height="177.9"/><rect x="824.39" y="692.1" width="2.7" height="177.9"/><rect x="832.30" y="691.1" width="2.7" height="178.9"/><rect x="840.21" y="693.1" width="2.7" height="176.9"/><rect x="848.13" y="693.1" width="2.7" height="176.9"/><rect x="856.04" y="693.1" width="2.7" height="176.9"/><rect x="863.96" y="693.1" width="2.7" height="176.9"/><rect x="871.87" y="693.1" width="2.7" height="176.9"/><rect x="879.78" y="698.2" width="2.7" height="171.8"/><rect x="887.70" y="699.2" width="2.7" height="170.8"/><rect x="895.61" y="698.2" width="2.7" height="171.8"/><rect x="903.53" y="699.2" width="2.7" height="170.8"/><rect x="911.44" y="698.2" width="2.7" height="171.8"/><rect x="919.35" y="697.1" width="2.7" height="172.9"/><rect x="927.27" y="693.1" width="2.7" height="176.9"/><rect x="935.18" y="690.1" width="2.7" height="179.9"/><rect x="943.10" y="692.1" width="2.7" height="177.9"/><rect x="951.01" y="691.1" width="2.7" height="178.9"/><rect x="958.92" y="690.1" width="2.7" height="179.9"/><rect x="966.84" y="693.1" width="2.7" height="176.9"/><rect x="974.75" y="695.1" width="2.7" height="174.9"/><rect x="982.67" y="692.1" width="2.7" height="177.9"/><rect x="990.58" y="689.1" width="2.7" height="180.9"/><rect x="998.49" y="692.1" width="2.7" height="177.9"/><rect x="1006.41" y="691.1" width="2.7" height="178.9"/><rect x="1014.32" y="695.1" width="2.7" height="174.9"/><rect x="1022.24" y="694.1" width="2.7" height="175.9"/><rect x="1030.15" y="696.1" width="2.7" height="173.9"/><rect x="1038.06" y="696.1" width="2.7" height="173.9"/><rect x="1045.98" y="692.1" width="2.7" height="177.9"/><rect x="1053.89" y="692.1" width="2.7" height="177.9"/><rect x="1061.81" y="687.1" width="2.7" height="182.9"/><rect x="1069.72" y="691.1" width="2.7" height="178.9"/><rect x="1077.63" y="690.1" width="2.7" height="179.9"/><rect x="1085.55" y="691.1" width="2.7" height="178.9"/><rect x="1093.46" y="689.1" width="2.7" height="180.9"/><rect x="1101.38" y="690.1" width="2.7" height="179.9"/><rect x="1109.29" y="689.1" width="2.7" height="180.9"/><rect x="1117.20" y="684.0" width="2.7" height="186.0"/><rect x="1125.12" y="687.1" width="2.7" height="182.9"/><rect x="1133.03" y="690.1" width="2.7" height="179.9"/><rect x="1140.95" y="692.1" width="2.7" height="177.9"/><rect x="1148.86" y="691.1" width="2.7" height="178.9"/><rect x="1156.77" y="694.0" width="2.7" height="176.0"/><rect x="1164.69" y="694.9" width="2.7" height="175.1"/><rect x="1172.60" y="694.9" width="2.7" height="175.1"/><rect x="1180.52" y="694.0" width="2.7" height="176.0"/><rect x="1188.43" y="694.0" width="2.7" height="176.0"/><rect x="1196.34" y="696.0" width="2.7" height="174.0"/><rect x="1204.26" y="694.0" width="2.7" height="176.0"/><rect x="1212.17" y="694.0" width="2.7" height="176.0"/><rect x="1220.09" y="691.0" width="2.7" height="179.0"/><rect x="1228.00" y="685.8" width="2.7" height="184.2"/></g>
<rect x="494" y="857" width="2.5" height="3" fill="#ff7f0e"/><rect x="502" y="857" width="2.5" height="3" fill="#ff7f0e"/>
<path d="M1074.5,532.5V549.5L1078.5,545.5L1081.5,552L1084,551L1081,544.5H1086.5Z" fill="#fff" stroke="#000" stroke-width="1"/>
</svg>

<div class="a tip" style="left:892px;top:398px;width:319px;">
 <div class="th">2017-08-11 06:50</div>
 <div class="tr"><span class="sw" style="background:#2ca02c"></span><span class="nm">Reported Hashrate</span><span class="vl">1.91872G</span></div>
 <div class="tr"><span class="sw" style="background:#ff7f0e"></span><span class="nm">Average Effective Hashrate</span><span class="vl">1.76476G</span></div>
 <div class="tr"><span class="sw" style="background:#1f77b4"></span><span class="nm">Current Effective Hashrate</span><span class="vl">1.76033G</span></div>
</div>

</body></html>
